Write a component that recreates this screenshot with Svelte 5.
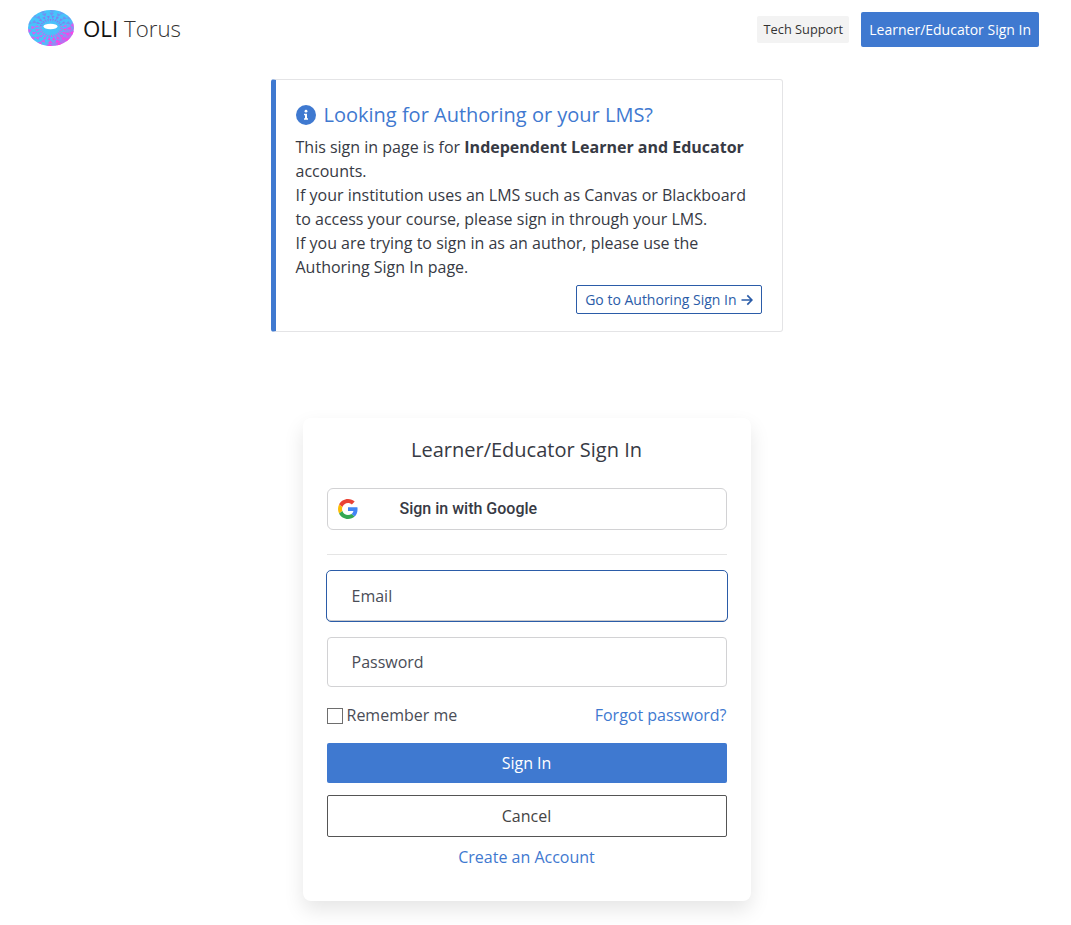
<script>
  const tiles = [];
  const rings = [
    { q0: 0.36, q1: 0.5, n: 26 },
    { q0: 0.5, q1: 0.68, n: 20 },
    { q0: 0.68, q1: 0.86, n: 16 },
    { q0: 0.86, q1: 1.02, n: 14 }
  ];
  rings.forEach((ring, r) => {
    for (let a = 0; a < ring.n; a++) {
      const step = (Math.PI * 2) / ring.n;
      const t0 = a * step + r * 0.35;
      const t1 = t0 + step * 0.6;
      const p = (t, q) => `${(23 + 23 * q * Math.cos(t)).toFixed(1)},${(18 + 18 * q * Math.sin(t)).toFixed(1)}`;
      const mid = (t0 + t1) / 2;
      const warm = Math.sin(mid) * 0.65 + Math.cos(mid) * 0.55;
      const top = Math.sin(mid) < -0.25;
      tiles.push({
        id: `${r}-${a}`,
        points: `${p(t0, ring.q1)} ${p(t1, ring.q1)} ${p(mid, ring.q0)}`,
        fill: warm > 0.45 ? "#ff3fe6" : top ? "#9a62ea" : "#e455ee",
        opacity: warm > 0.45 ? 0.95 : top ? 0.85 - r * 0.17 : 0.9
      });
    }
  });
</script>

<div class="page">
  <header class="topbar">
    <a class="brand" href="#top">
      <svg class="logo" viewBox="0 0 46 36" aria-hidden="true">
        <defs>
          <linearGradient id="torus" x1="0.1" y1="0.2" x2="0.9" y2="0.95">
            <stop offset="0" stop-color="#45c4fb" />
            <stop offset="0.62" stop-color="#4cc0fa" />
            <stop offset="0.82" stop-color="#a87af2" />
            <stop offset="1" stop-color="#f04ce8" />
          </linearGradient>
          <clipPath id="torus-clip">
            <ellipse cx="23" cy="18" rx="23" ry="18" />
          </clipPath>
        </defs>
        <ellipse cx="23" cy="18" rx="23" ry="18" fill="url(#torus)" />
        <g clip-path="url(#torus-clip)">
          {#each tiles as tile (tile.id)}
            <polygon points={tile.points} fill={tile.fill} fill-opacity={tile.opacity} />
          {/each}
        </g>
        <ellipse cx="22.500" cy="16.500" rx="7" ry="2.700" fill="#ffffff" />
      </svg>
      <span class="brand-name"><span class="oli">OLI</span> <span class="torus">Torus</span></span>
    </a>
    <nav class="actions">
      <a class="support" href="#top">Tech Support</a>
      <a class="primary-small" href="#top">Learner/Educator Sign In</a>
    </nav>
  </header>

  <main class="main">
    <section class="notice">
      <h2 class="notice-title">
        <svg class="info" viewBox="0 0 20 20" aria-hidden="true">
          <circle cx="10" cy="10" r="10" fill="#3f79d0" />
          <circle cx="10" cy="6.200" r="1.400" fill="#fff" />
          <path d="M8 8.700h3v4.500h1v1.500H8v-1.500h1v-3H8z" fill="#fff" />
        </svg>
        Looking for Authoring or your LMS?
      </h2>
      <p>
        This sign in page is for <strong>Independent Learner and Educator</strong> accounts.<br />
        If your institution uses an LMS such as Canvas or Blackboard to access your course, please sign in through your LMS.<br />
        If you are trying to sign in as an author, please use the Authoring Sign In page.
      </p>
      <div class="notice-action">
        <a class="outline-small" href="#top">
          Go to Authoring Sign In
          <svg class="arrow" viewBox="0 0 12 12" aria-hidden="true">
            <path d="M0.500 6h10M6.300 1.400 10.900 6l-4.600 4.600" fill="none" stroke="currentColor" stroke-width="1.700" />
          </svg>
        </a>
      </div>
    </section>

    <section class="card">
      <h1 class="card-title">Learner/Educator Sign In</h1>

      <button class="google" type="button">
        <svg class="g-mark" viewBox="0 0 48 48" aria-hidden="true">
          <path fill="#EA4335" d="M24 9.5c3.5 0 6.7 1.2 9.2 3.6l6.9-6.9C35.900 2.400 30.500 0 24 0 14.600 0 6.500 5.400 2.600 13.200l8 6.200C12.500 13.700 17.800 9.500 24 9.500z" />
          <path fill="#4285F4" d="M46.900 24.500c0-1.600-.1-3.100-.4-4.500H24v9h12.900c-.6 3-2.200 5.500-4.700 7.200l7.700 6c4.500-4.200 7-10.300 7-17.700z" />
          <path fill="#FBBC05" d="M10.500 28.600c-.5-1.400-.8-3-.8-4.600s.3-3.200.8-4.600l-8-6.200C.9 16.500 0 20.100 0 24s.9 7.500 2.600 10.800l7.900-6.200z" />
          <path fill="#34A853" d="M24 48c6.500 0 11.900-2.100 15.900-5.800l-7.700-6c-2.200 1.500-4.900 2.300-8.200 2.300-6.200 0-11.500-4.200-13.400-9.900l-8 6.200C6.500 42.600 14.600 48 24 48z" />
        </svg>
        <span class="google-label">Sign in with Google</span>
      </button>

      <hr class="divider" />

      <div class="field focused">Email</div>
      <div class="field password">Password</div>

      <div class="options">
        <label class="remember">
          <span class="check"></span>
          Remember me
        </label>
        <a class="link" href="#top">Forgot password?</a>
      </div>

      <button class="signin" type="button">Sign In</button>
      <button class="cancel" type="button">Cancel</button>
      <a class="link create" href="#top">Create an Account</a>
    </section>
  </main>
</div>

<style>
  :global(body) {
    margin: 0;
    background: #fff;
    font-family: "Open Sans", "Liberation Sans", sans-serif;
    color: #373a44;
  }

  a {
    text-decoration: none;
  }

  .page {
    min-height: 925px;
    box-sizing: border-box;
    padding-bottom: 24px;
  }

  .topbar {
    display: flex;
    justify-content: space-between;
    align-items: flex-start;
    box-sizing: border-box;
    height: 59px;
    padding: 10px 32px 0 28px;
  }

  .brand {
    display: flex;
    align-items: center;
    gap: 9px;
    color: #111;
  }

  .logo {
    width: 46px;
    height: 36px;
    display: block;
  }

  .brand-name {
    font-size: 22.3px;
    line-height: 30px;
    margin-top: 1px;
  }

  .torus {
    font-weight: 300;
    color: #333;
  }

  .actions {
    display: flex;
    align-items: center;
    gap: 12px;
    margin-top: 2px;
  }

  .support {
    display: flex;
    align-items: center;
    box-sizing: border-box;
    width: 92px;
    height: 27px;
    padding: 0 0 1px;
    justify-content: center;
    font-size: 12.8px;
    color: #333;
    background: #f3f3f3;
    border-radius: 2px;
  }

  .primary-small {
    display: flex;
    align-items: center;
    height: 35px;
    padding: 0 8px;
    font-size: 14px;
    color: #fff;
    background: #3f79d0;
    border-radius: 2px;
  }

  .main {
    display: flex;
    flex-direction: column;
    align-items: center;
    padding-right: 18px;
  }

  .notice {
    box-sizing: border-box;
    width: 512px;
    height: 253px;
    margin-top: 20px;
    padding: 20px 20px 0 20px;
    border: 1px solid #e4e4e6;
    border-left: 5px solid #3f79d0;
    border-radius: 3px;
  }

  .notice-title {
    display: flex;
    align-items: center;
    gap: 8px;
    margin: 0;
    font-size: 20px;
    font-weight: 400;
    line-height: 30px;
    color: #3f79d0;
  }

  .info {
    width: 20px;
    height: 20px;
    flex: none;
  }

  .notice p {
    margin: 5px 0 0;
    font-size: 16px;
    line-height: 24px;
  }

  .notice strong {
    font-weight: 700;
  }

  .notice-action {
    display: flex;
    justify-content: flex-end;
    margin-top: 6px;
  }

  .outline-small {
    display: flex;
    align-items: center;
    gap: 4px;
    box-sizing: border-box;
    height: 29px;
    padding: 0 8px;
    font-size: 14px;
    color: #2b5ca8;
    border: 1px solid #2b5ca8;
    border-radius: 2px;
  }

  .arrow {
    width: 12px;
    height: 12px;
  }

  .card {
    box-sizing: border-box;
    display: flex;
    flex-direction: column;
    width: 448px;
    height: 483px;
    margin-top: 86px;
    padding: 17px 24px 0;
    background: #fff;
    border-radius: 8px;
    box-shadow: 0 9px 20px rgba(0, 0, 0, 0.1);
  }

  .card-title {
    margin: 0;
    font-size: 20px;
    font-weight: 400;
    line-height: 30px;
    text-align: center;
  }

  button {
    font-family: inherit;
    cursor: pointer;
  }

  .google {
    display: flex;
    align-items: center;
    box-sizing: border-box;
    width: 100%;
    height: 42px;
    margin-top: 23px;
    padding: 0 0 0 10px;
    background: #fff;
    border: 1px solid #d2d2d4;
    border-radius: 6px;
    font-family: Roboto, "Open Sans", sans-serif;
    font-size: 16px;
    font-weight: 500;
    color: #373a44;
  }

  .google-label {
    padding-bottom: 2px;
  }

  .g-mark {
    width: 20px;
    height: 20px;
    flex: none;
    margin-right: 42px;
  }

  .divider {
    width: 100%;
    margin: 24px 0 0;
    border: 0;
    border-top: 1px solid #e5e5e5;
  }

  .field {
    display: flex;
    align-items: center;
    box-sizing: border-box;
    width: 100%;
    height: 50px;
    padding-left: 24px;
    font-size: 16px;
    color: #4a4d57;
    border: 1px solid #d2d2d4;
    border-radius: 4px;
  }

  .focused {
    width: calc(100% + 2px);
    height: 52px;
    margin: 15px 0 0 -1px;
    padding-left: 25px;
    border-color: #2b5ca8;
    border-radius: 5px;
    box-shadow: inset 0 -1px 0 #c9c9cc;
  }

  .password {
    margin-top: 15px;
  }

  .options {
    display: flex;
    justify-content: space-between;
    align-items: center;
    margin-top: 16px;
    height: 24px;
  }

  .remember {
    display: flex;
    align-items: center;
    gap: 4px;
    font-size: 16px;
    color: #4a4d57;
  }

  .check {
    box-sizing: border-box;
    width: 16px;
    height: 16px;
    margin-top: 2px;
    border: 1px solid #6e6e6e;
    background: #fff;
  }

  .link {
    font-size: 16px;
    line-height: 24px;
    color: #3f79d0;
  }

  .signin {
    height: 40px;
    margin-top: 16px;
    font-size: 16px;
    color: #fff;
    background: #3f79d0;
    border: 0;
    border-radius: 2px;
  }

  .cancel {
    height: 42px;
    margin-top: 12px;
    font-size: 16px;
    color: #444;
    background: #fff;
    border: 1px solid #555;
    border-radius: 2px;
  }

  .create {
    margin-top: 8px;
    text-align: center;
  }
</style>
